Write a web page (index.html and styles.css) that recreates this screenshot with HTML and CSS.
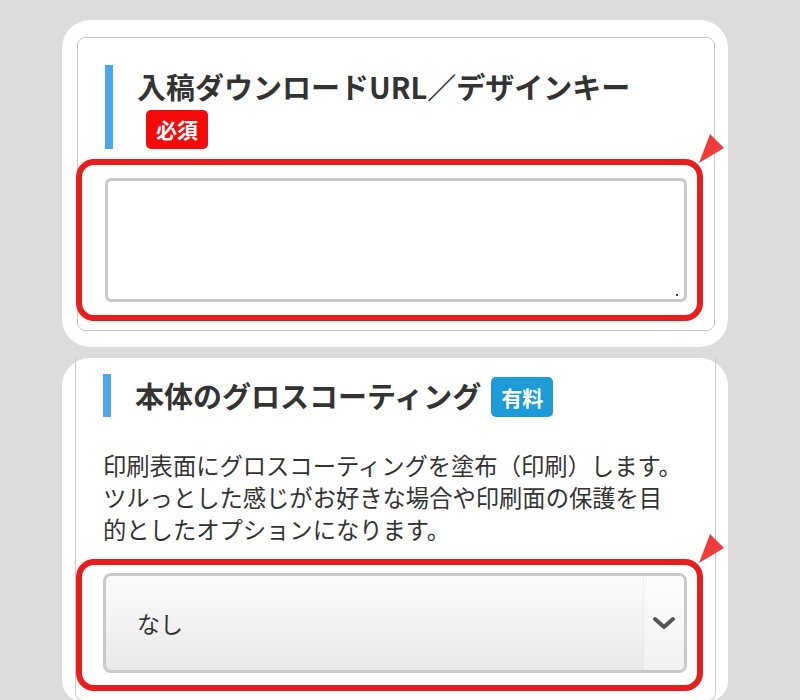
FILE: index.html
```html
<!DOCTYPE html>
<html lang="ja">

<head>
    <meta charset="utf-8">
    <meta name="viewport" content="width=device-width, initial-scale=1.0">
    <title>入稿フォーム</title>
    <link rel="stylesheet" href="styles.css">
</head>

<body>
    <div class="page">
        <section class="card card--upload">
            <div class="box">
                <h2 class="heading">入稿ダウンロードURL／デザインキー<br><span class="badge badge--required">必須</span></h2>
                <div class="mark">
                    <textarea class="field"></textarea>
                    <span class="grip"></span>
                    <svg class="pointer" width="27" height="31" viewBox="0 0 27 31"><polygon points="12,1 26,15 1,30" /></svg>
                </div>
            </div>
        </section>

        <section class="card card--coating">
            <div class="box">
                <h2 class="heading">本体のグロスコーティング<span class="badge badge--paid">有料</span></h2>
                <p class="note">印刷表面にグロスコーティングを塗布（印刷）します。<br>ツルっとした感じがお好きな場合や印刷面の保護を目<br>的としたオプションになります。</p>
                <div class="mark">
                    <div class="select">
                        <span class="select-value">なし</span>
                        <span class="select-arrow">
                            <svg width="24" height="15" viewBox="0 0 24 15"><polyline points="3,3 12,11 21,3" /></svg>
                        </span>
                    </div>
                    <svg class="pointer" width="27" height="31" viewBox="0 0 27 31"><polygon points="12,1 26,15 1,30" /></svg>
                </div>
            </div>
        </section>
    </div>
</body>

</html>
```

FILE: styles.css
```css
* {
    box-sizing: border-box;
}

body {
    margin: 0;
    background: #dcdcdc;
    font-family: "Noto Sans CJK JP", "Noto Sans", sans-serif;
    color: #333;
    overflow: hidden;
}

.page {
    width: 666px;
    margin-left: 62px;
    padding-top: 20px;
}

/* white cards */
.card {
    background: #fff;
    border-radius: 28px;
}

.card--upload {
    padding: 17px 13px 16px 15px;
}

.card--coating {
    margin-top: 11px;
    padding: 0 12px 0 13px;
    border-radius: 28px 28px 20px 20px;
}

.box {
    border: 1px solid #c8c8c8;
    border-radius: 8px;
    padding: 27px 27px 9px;
}

.card--coating .box {
    border-top: none;
    border-radius: 0 0 8px 8px;
    padding-top: 16px;
}

/* headings */
.heading {
    margin: 0;
    border-left: 8px solid #4ba6ec;
    padding-left: 24px;
    font-size: 29px;
    font-weight: 700;
    line-height: 42px;
    color: #333;
}

.card--coating .heading {
    line-height: 43px;
}

.badge {
    display: inline-block;
    height: 39px;
    margin-left: 9px;
    padding: 0 10px;
    border-radius: 5px;
    color: #fff;
    font-size: 21px;
    font-weight: 700;
    line-height: 39px;
    vertical-align: bottom;
}

.badge--required {
    background: #f50a0a;
}

.badge--paid {
    height: 40px;
    line-height: 40px;
    background: #1d9bd8;
    margin-left: 10px;
}

.note {
    margin: 32px -12px 14px 0;
    font-size: 23.3px;
    line-height: 32px;
    color: #333;
}

/* red highlight around the inputs */
.mark {
    position: relative;
    border: 6px solid #e81e1c;
    border-radius: 18px;
}

.card--upload .mark {
    margin: 10px -16px 0 -29px;
    padding: 13px 10px 13px 23px;
}

.card--coating .mark {
    margin: 0 -15px 0 -27px;
    padding: 8px 10px 12px 21px;
}

.pointer {
    position: absolute;
    top: -32px;
    right: -28px;
    fill: #f23c3c;
}

.field {
    display: block;
    width: 100%;
    height: 124px;
    margin: 0;
    border: 3px solid #c8c8c8;
    border-radius: 6px;
    background: #fff;
    resize: none;
}

.grip {
    position: absolute;
    right: 19px;
    bottom: 19px;
    width: 2px;
    height: 2px;
    background: #444;
}

.select {
    display: flex;
    height: 100px;
    border: 3px solid #c9c9c9;
    border-radius: 8px;
    background: linear-gradient(#fbfbfb, #e9e9e9);
    overflow: hidden;
}

.select-value {
    flex: 1;
    align-self: center;
    padding-left: 31px;
    font-size: 23px;
    color: #333;
}

.select-arrow {
    display: flex;
    align-items: center;
    justify-content: center;
    width: 41px;
    border-left: 1px dotted #dedede;
    background: linear-gradient(#fdfdfd, #f1f1f1);
}

.select-arrow polyline {
    fill: none;
    stroke: #555;
    stroke-width: 4;
    stroke-linecap: round;
    stroke-linejoin: round;
}
```
